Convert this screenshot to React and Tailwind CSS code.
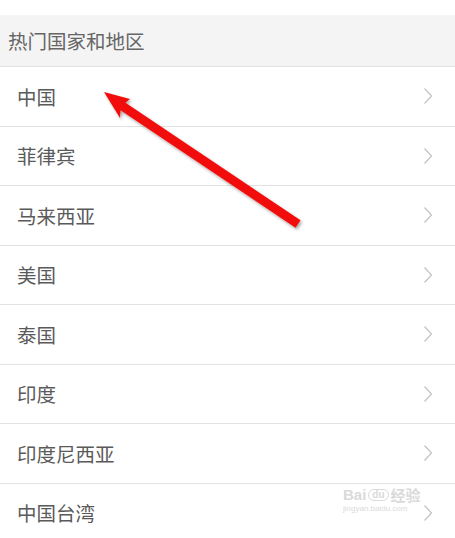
import React from 'react';

const countries = ['中国', '菲律宾', '马来西亚', '美国', '泰国', '印度', '印度尼西亚', '中国台湾'];

function Chevron() {
  return (
    <svg width="10" height="18" viewBox="0 0 10 18" className="shrink-0">
      <path d="M1.5 1.5 L8.5 9 L1.5 16.5" fill="none" stroke="#c4c4c4" strokeWidth="1.3" />
    </svg>
  );
}

function App() {
  return (
    <div
      className="relative w-[455px] h-[538px] overflow-hidden bg-white"
      style={{ fontFamily: '"Noto Sans CJK SC", "Noto Sans", sans-serif' }}
    >
      <div className="h-[15px] bg-white" />
      <div className="h-[52px] bg-[#f4f4f4] border-b border-[#e2e2e2] flex items-center pl-[8px] text-[19.5px] text-[#666]">
        热门国家和地区
      </div>
      <ul>
        {countries.map((name) => (
          <li
            key={name}
            className="h-[59.5px] border-b border-[#e2e2e2] flex items-center justify-between pl-[17px] pr-[22px] text-[19.5px] text-[#5a5a5a]"
          >
            <span>{name}</span>
            <Chevron />
          </li>
        ))}
      </ul>

      {/* red annotation arrow */}
      <svg className="absolute left-0 top-0 pointer-events-none" width="455" height="538">
        <defs>
          <filter id="sh" x="-10%" y="-10%" width="130%" height="130%">
            <feDropShadow dx="1.5" dy="2" stdDeviation="1.5" floodColor="#000" floodOpacity="0.35" />
          </filter>
        </defs>
        <path
          filter="url(#sh)"
          fill="#f20d0d"
          d="M104 92 L130 99 L125.5 102.8 L300.5 220.3 L295.5 227.7 L120.5 110.2 L120 118 Z"
        />
      </svg>

      {/* watermark */}
      <div className="absolute left-[343px] top-[487px] text-[#dadada] leading-none pointer-events-none">
        <div className="flex items-center gap-[2px] text-[15px] font-bold" style={{ fontFamily: '"Liberation Sans", sans-serif' }}>
          <span>Bai</span>
          <span className="rounded-full border border-[#dadada] px-[3px] text-[10px]">du</span>
          <span className="text-[15px]" style={{ fontFamily: '"Noto Sans CJK SC", sans-serif' }}>经验</span>
        </div>
        <div className="text-[8px] mt-[3px]" style={{ fontFamily: '"Liberation Sans", sans-serif' }}>jingyan.baidu.com</div>
      </div>
    </div>
  );
}

export default App;
